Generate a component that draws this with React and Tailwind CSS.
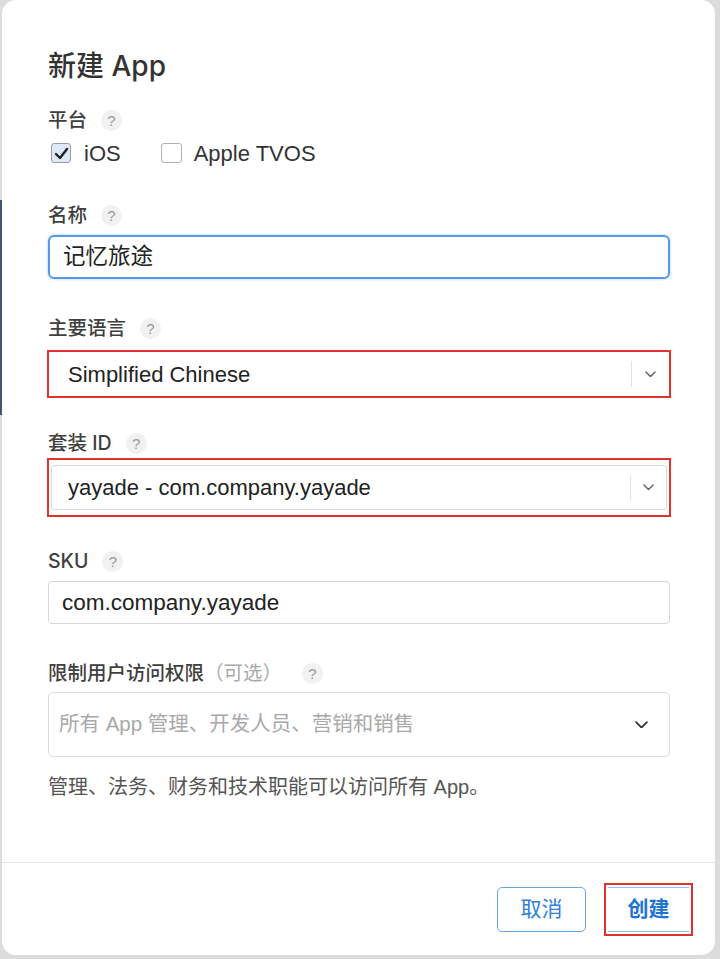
import React from "react";

const FONT = { fontFamily: '"Liberation Sans", "Noto Sans CJK SC", sans-serif' };
const HEAD = { fontFamily: 'Inter, "Noto Sans CJK SC", sans-serif' };

function Help() {
  return (
    <span
      className="ml-[14px] inline-flex h-[21px] w-[21px] items-center justify-center rounded-full bg-[#f1f1f1] text-[15px] font-normal leading-none text-[#9a9a9a]"
      style={FONT}
    >
      ?
    </span>
  );
}

function Label({ children, extra, mt }) {
  return (
    <div
      className={`flex h-[24px] items-center text-[19.5px] font-medium leading-[24px] text-[#3f3f3f] ${mt}`}
      style={HEAD}
    >
      <span>{children}</span>
      {extra}
      <Help />
    </div>
  );
}

function Chevron({ className = "", color = "#666", w = 12 }) {
  return (
    <svg width={w} height={w * 0.6} viewBox="0 0 12 7" className={className}>
      <polyline points="1,1 6,6 11,1" fill="none" stroke={color} strokeWidth="1.6" strokeLinecap="round" strokeLinejoin="round" />
    </svg>
  );
}

export default function App() {
  return (
    <div className="flex h-[959px] w-[720px] bg-[#dcdcdc]" style={FONT}>
      <div className="w-[2px] shrink-0">
        <div className="mt-[200px] h-[215px] w-[2px] bg-[#44566c]" />
      </div>
      <div className="flex h-[955px] w-[713px] flex-col rounded-[14px] bg-white">
        <div className="flex flex-col pl-[46px] pr-[45px] pt-[48px]">
          <div className="h-[36px] text-[28px] font-medium leading-[36px] text-[#333]" style={HEAD}>
            新建 App
          </div>

          <Label mt="mt-[24px]">平台</Label>
          <div className="mt-[9px] flex h-[24px] items-center text-[22px] text-[#333]">
            <span className="ml-[3px] flex h-[20px] w-[20px] items-center justify-center rounded-[3px] border border-[#9c9c9c] bg-[#dde9f7]">
              <svg width="15" height="13" viewBox="0 0 15 13">
                <polyline points="2,7 6,11 13,2" fill="none" stroke="#222" strokeWidth="2.4" strokeLinecap="round" strokeLinejoin="round" />
              </svg>
            </span>
            <span className="ml-[13px]">iOS</span>
            <span className="ml-[40px] h-[20px] w-[21px] rounded-[3px] border border-[#b0b0b0] bg-white" />
            <span className="ml-[12px]">Apple TVOS</span>
          </div>

          <Label mt="mt-[38px]">名称</Label>
          <div className="mt-[8px] flex h-[44px] items-center rounded-[6px] border-2 border-[#5598e8] pl-[13px] text-[22.5px] text-[#222] shadow-[0_0_3px_#a9cdf5]">
            记忆旅途
          </div>

          <Label mt="mt-[37px]">主要语言</Label>
          <div className="mt-[10px] ml-[-1px] mr-[-1px] flex h-[48px] items-center border-2 border-[#e0322c] text-[22px] text-[#222]">
            <span className="flex-1 pl-[19px]">Simplified Chinese</span>
            <span className="h-[26px] w-px bg-[#e2e2e2]" />
            <span className="flex w-[37px] justify-center">
              <Chevron w={11} />
            </span>
          </div>

          <Label mt="mt-[33px]">套装 ID</Label>
          <div className="mt-[3px] ml-[-1px] mr-[-1px] h-[59px] border-2 border-[#e0322c] px-[2px] py-[5px]">
            <div className="flex h-[45px] items-center rounded-[3px] border border-[#d9d9d9] text-[22px] text-[#222]">
              <span className="flex-1 pl-[16px]">yayade - com.company.yayade</span>
              <span className="h-[26px] w-px bg-[#e2e2e2]" />
              <span className="flex w-[35px] justify-center">
                <Chevron w={11} />
              </span>
            </div>
          </div>

          <Label mt="mt-[32px]">SKU</Label>
          <div className="mt-[8px] flex h-[43px] items-center rounded-[4px] border border-[#d6d6d6] pl-[13px] text-[22.5px] text-[#222]">
            com.company.yayade
          </div>

          <Label
            mt="mt-[37px]"
            extra={<span className="mr-[6px] font-normal text-[#aaa]">（可选）</span>}
          >
            限制用户访问权限
          </Label>
          <div className="mt-[7px] flex h-[65px] items-center rounded-[5px] border border-[#dcdcdc] pl-[10px] text-[20.5px] text-[#a9a9a9]">
            <span className="flex-1">所有 App 管理、开发人员、营销和销售</span>
            <span className="mr-[21px]">
              <Chevron w={13} color="#333" />
            </span>
          </div>

          <div className="mt-[17px] h-[26px] text-[20px] leading-[26px] text-[#555]">
            管理、法务、财务和技术职能可以访问所有 App。
          </div>
        </div>

        <div className="mt-auto flex h-[93px] items-center justify-end border-t border-[#e6e6e6] pr-[22px]">
          <button className="flex h-[45px] w-[89px] items-center justify-center rounded-[5px] border border-[#6aa6e6] bg-white text-[21px] text-[#2d80d6]">
            取消
          </button>
          <div className="ml-[18px] flex h-[53px] w-[89px] items-center justify-center border-2 border-[#e0322c] px-[2px]">
            <button className="flex h-[45px] w-full items-center justify-center border-y border-[#8dbdf0] bg-white text-[21px] font-bold text-[#1f74d2]">
              创建
            </button>
          </div>
        </div>
      </div>
    </div>
  );
}
